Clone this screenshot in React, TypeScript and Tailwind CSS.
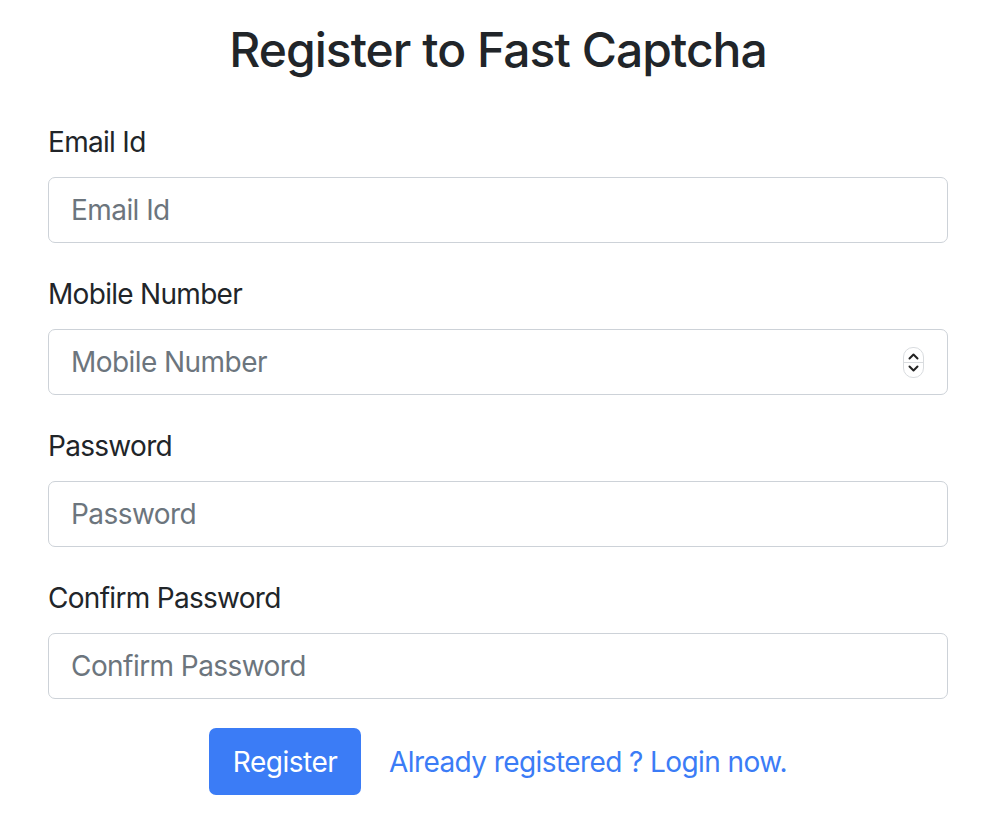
import React from "react";

function Field({ label, stepper }: { label: string; stepper?: boolean }) {
  return (
    <div className="mb-[30px]">
      <label className="block h-[42px] text-[28px] leading-[42px] text-[#212529] mb-[14px] tracking-[-0.025em]">{label}</label>
      <div className="relative">
        <input
          type="text"
          placeholder={label}
          className="block w-full h-[66px] rounded-[7px] border border-[#cdd2d8] bg-white px-[22px] text-[28px] tracking-[-0.02em] text-[#212529] placeholder:text-[#6c757d] outline-none"
        />
        {stepper && (
          <div className="absolute right-[24px] top-[18px] w-[21px] h-[31px] rounded-[10px] border border-[#d9dcdf] bg-white flex flex-col items-center justify-center">
            <svg width="13" height="9" viewBox="0 0 13 9" className="mb-[1px]">
              <path d="M2.5 6.5 L6.5 2.5 L10.5 6.5" fill="none" stroke="#222" strokeWidth="2" strokeLinecap="round" strokeLinejoin="round" />
            </svg>
            <div className="w-full h-px bg-[#d9dcdf]" />
            <svg width="13" height="9" viewBox="0 0 13 9" className="mt-[1px]">
              <path d="M2.5 2.5 L6.5 6.5 L10.5 2.5" fill="none" stroke="#222" strokeWidth="2" strokeLinecap="round" strokeLinejoin="round" />
            </svg>
          </div>
        )}
      </div>
    </div>
  );
}

export default function App() {
  return (
    <div className="min-h-[818px] w-[986px] bg-white" style={{ fontFamily: "Inter, 'Noto Sans', sans-serif" }}>
      <div className="ml-[48px] w-[900px] pt-[21px]">
        <h3 className="text-center text-[48px] leading-[58px] font-medium text-[#212529] mb-[42px] tracking-[-0.02em]">Register to Fast Captcha</h3>
        <Field label="Email Id" />
        <Field label="Mobile Number" stepper />
        <Field label="Password" />
        <Field label="Confirm Password" />
        <div className="-mt-[1px] flex items-center justify-center gap-[28px]">
          <button className="h-[67px] w-[152px] rounded-[7px] bg-[#3b7cf6] text-white text-[28px] tracking-[-0.018em]">Register</button>
          <a className="text-[28px] text-[#3b7cf6] tracking-[-0.021em]">Already registered ? Login now.</a>
        </div>
      </div>
    </div>
  );
}
